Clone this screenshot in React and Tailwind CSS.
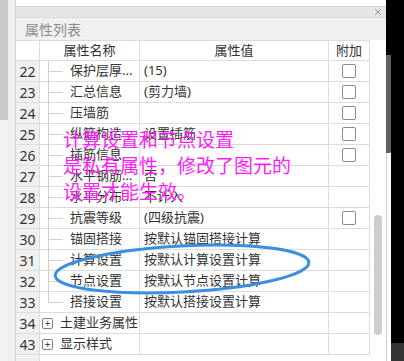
const rows = [
  { n: 22, name: "保护层厚...", value: "(15)", check: true },
  { n: 23, name: "汇总信息", value: "(剪力墙)", check: true },
  { n: 24, name: "压墙筋", value: "", check: true },
  { n: 25, name: "纵筋构造", value: "设置插筋", check: true },
  { n: 26, name: "插筋信息", value: "", check: true },
  { n: 27, name: "水平钢筋...", value: "否", check: false },
  { n: 28, name: "水平分布...", value: "不计入", check: false },
  { n: 29, name: "抗震等级", value: "(四级抗震)", check: true },
  { n: 30, name: "锚固搭接", value: "按默认锚固搭接计算", check: false },
  { n: 31, name: "计算设置", value: "按默认计算设置计算", check: false },
  { n: 32, name: "节点设置", value: "按默认节点设置计算", check: false },
  { n: 33, name: "搭接设置", value: "按默认搭接设置计算", check: false, last: true },
  { n: 34, name: "土建业务属性", group: true },
  { n: 43, name: "显示样式", group: true },
];

function Row({ row }) {
  return (
    <div className="flex h-[21px] border-b border-[#dcdcdc]">
      <div className="w-[24px] shrink-0 bg-[#f0f0f0] border-r border-[#dcdcdc] flex items-center justify-center text-[14px]">
        {row.n}
      </div>
      <div className="w-[100px] shrink-0 border-r border-[#dcdcdc] relative flex items-center">
        {row.group ? (
          <>
            <div className="ml-[2px] w-[11px] h-[11px] border border-[#808080] rounded-[2px] flex items-center justify-center text-[10px] leading-none text-[#444]">
              +
            </div>
            <span className="ml-[7px] whitespace-nowrap">{row.name}</span>
          </>
        ) : (
          <>
            <div
              className={
                row.last
                  ? "absolute left-[8px] top-0 h-[10px] border-l border-[#cfcfcf]"
                  : "absolute left-[8px] top-0 bottom-[-1px] border-l border-[#cfcfcf]"
              }
            />
            <div className="absolute left-[8px] top-[10px] w-[15px] border-t border-[#cfcfcf]" />
            <span className="ml-[30px] whitespace-nowrap">{row.name}</span>
          </>
        )}
      </div>
      <div className="w-[189px] shrink-0 border-r border-[#dcdcdc] flex items-center pl-[4px] whitespace-nowrap">
        {row.value}
      </div>
      <div className="w-[41px] shrink-0 border-r border-[#dcdcdc] flex items-center justify-center">
        {row.check && (
          <div className="w-[14px] h-[14px] border border-[#8a8a8a] rounded-[2px] bg-white" />
        )}
      </div>
    </div>
  );
}

export default function App() {
  return (
    <div
      className="w-[404px] h-[361px] flex overflow-hidden relative bg-white text-[13px] text-[#333]"
      style={{ fontFamily: '"Noto Sans", "Noto Sans CJK SC", sans-serif' }}
    >
      {/* left edge scroll strip */}
      <div className="w-[8px] shrink-0 flex flex-col">
        <div className="h-[120px] bg-[#c9c9c9]" />
        <div className="flex-1 bg-[#f2f2f2]" />
      </div>
      <div className="w-[7px] shrink-0 bg-[#f0f0f0]" />

      {/* panel */}
      <div className="w-[371px] shrink-0 border-l border-[#d0d0d0] flex flex-col">
        <div className="h-[7px] border-b border-[#d6d6d6] bg-white" />
        <div className="h-[11px] bg-[#e6e6e6] border-b border-[#d8d8d8] flex items-center justify-end pr-[4px]">
          <svg width="8" height="8" viewBox="0 0 8 8">
            <path d="M1 1L7 7M7 1L1 7" stroke="#9a9a9a" strokeWidth="1" />
          </svg>
        </div>
        <div className="h-[22px] bg-[#f0f0f0] flex items-center pl-[9px] text-[14px] text-[#8a8a8a]">
          属性列表
        </div>
        <div className="flex flex-1">
          {/* grid */}
          <div className="w-[354px] shrink-0 flex flex-col">
            <div className="flex h-[21px] border-b border-t border-[#dcdcdc]">
              <div className="w-[24px] shrink-0 border-r border-[#dcdcdc]" />
              <div className="w-[100px] shrink-0 border-r border-[#dcdcdc] flex items-center justify-center">
                属性名称
              </div>
              <div className="w-[189px] shrink-0 border-r border-[#dcdcdc] flex items-center justify-center">
                属性值
              </div>
              <div className="w-[41px] shrink-0 border-r border-[#dcdcdc] flex items-center justify-center">
                附加
              </div>
            </div>
            {rows.map((r) => (
              <Row key={r.n} row={r} />
            ))}
            <div className="flex flex-1">
              <div className="w-[24px] shrink-0 bg-[#f0f0f0] border-r border-[#dcdcdc]" />
              <div className="flex-1" />
            </div>
          </div>
          {/* inner scrollbar */}
          <div className="flex-1 flex flex-col items-center pt-[175px]">
            <div className="w-[8px] h-[120px] rounded-full bg-[#cdcdcd]" />
          </div>
        </div>
      </div>

      {/* outer scrollbar */}
      <div className="w-[5px] shrink-0 flex flex-col">
        <div className="h-[55px] bg-black" />
        <div className="h-[98px] bg-[#5a626a]" />
        <div className="flex-1 bg-white border-l border-[#cfcfcf]" />
      </div>
      <div className="flex-1 flex flex-col">
        <div className="flex-1 bg-black" />
        <div className="h-[18px] bg-[#333333]" />
      </div>

      {/* annotation */}
      <div className="absolute left-[63px] top-[127px] text-[19px] leading-[26px] text-[#ff1cf7] whitespace-nowrap pointer-events-none">
        <div>计算设置和节点设置</div>
        <div>是私有属性，修改了图元的</div>
        <div>设置才能生效。</div>
      </div>
      <svg className="absolute left-0 top-0 pointer-events-none" width="404" height="361">
        <ellipse
          cx="182"
          cy="269"
          rx="127"
          ry="23"
          fill="none"
          stroke="#3a8fe0"
          strokeWidth="3"
          transform="rotate(-3 182 269)"
        />
      </svg>
    </div>
  );
}
